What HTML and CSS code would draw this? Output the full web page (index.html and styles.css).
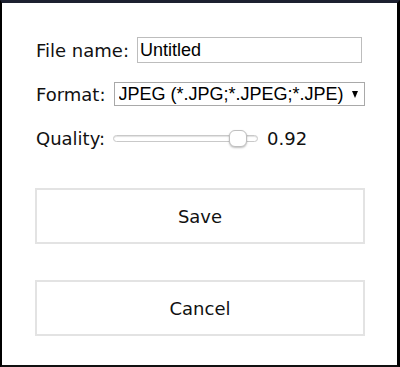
FILE: index.html
```html
<!DOCTYPE html>
<html>
<head>
<meta charset="utf-8">
<link rel="stylesheet" href="styles.css">
</head>
<body>
<div class="frame">
  <div class="row">
    <label class="label" for="fname">File name:</label>
    <input id="fname" class="text-input" type="text" value="Untitled">
  </div>
  <div class="row">
    <label class="label" for="fmt">Format:</label>
    <div class="select-wrap">
      <select id="fmt" class="select">
        <option>JPEG (*.JPG;*.JPEG;*.JPE)</option>
      </select>
    </div>
  </div>
  <div class="row">
    <label class="label" for="q">Quality:</label>
    <input id="q" class="range" type="range" min="0" max="1" step="0.01" value="0.92">
    <span class="value">0.92</span>
  </div>
  <button class="btn save">Save</button>
  <button class="btn cancel">Cancel</button>
</div>
</body>
</html>
```
FILE: styles.css
```css
html, body {
  margin: 0;
  padding: 0;
  background: #fff;
}
.frame {
  box-sizing: border-box;
  width: 400px;
  height: 367px;
  border-top: 3px solid #1c2030;
  border-left: 2px solid #000;
  border-right: 3px solid #000;
  border-bottom: 2px solid #111;
  padding: 25px 0 0 33px;
  font-family: "DejaVu Sans", Verdana, sans-serif;
  font-size: 18px;
  color: #111;
  display: flex;
  flex-direction: column;
}
.row {
  height: 44px;
  display: flex;
  align-items: center;
}
.label {
  margin-left: 1px;
  margin-right: 8px;
}
.text-input {
  box-sizing: border-box;
  width: 225px;
  height: 26px;
  border: 1px solid #bdbdbd;
  padding: 0 2px;
  margin: 0;
  font-family: "Liberation Sans", Arial, sans-serif;
  font-size: 18px;
  color: #000;
  outline: none;
}
.select-wrap {
  position: relative;
}
.select-wrap::after {
  content: "";
  position: absolute;
  right: 7px;
  top: 9px;
  border-left: 3.5px solid transparent;
  border-right: 3.5px solid transparent;
  border-top: 7px solid #000;
  pointer-events: none;
}
.select {
  appearance: none;
  -webkit-appearance: none;
  box-sizing: border-box;
  width: 251px;
  height: 24px;
  border: 1px solid #a9a9a9;
  border-radius: 0;
  background: #fff;
  padding: 0 0 0 4px;
  font-family: "Liberation Sans", Arial, sans-serif;
  font-size: 18px;
  color: #000;
  outline: none;
}
.range {
  -webkit-appearance: none;
  appearance: none;
  width: 145px;
  height: 18px;
  margin: 0;
  padding: 0;
  background: transparent;
}
.range::-webkit-slider-runnable-track {
  box-sizing: border-box;
  height: 7px;
  background: #fff;
  border: 1px solid #c9c9c9;
  border-radius: 4px;
  box-shadow: inset 0 1px 1px #e2e2e2;
}
.range::-webkit-slider-thumb {
  -webkit-appearance: none;
  box-sizing: border-box;
  width: 18px;
  height: 17px;
  margin-top: -6px;
  background: #fff;
  border: 1px solid #bfbfbf;
  border-radius: 6px;
  box-shadow: 0 1px 2px rgba(0,0,0,0.25);
}
.value {
  margin-left: 9px;
}
.btn {
  box-sizing: border-box;
  width: 330px;
  height: 56px;
  margin-left: 0;
  border: 2px solid #e3e3e3;
  background: #fff;
  font-family: "DejaVu Sans", Verdana, sans-serif;
  font-size: 18px;
  color: #111;
  padding: 0;
}
.save {
  margin-top: 28px;
}
.cancel {
  margin-top: 36px;
}
```
